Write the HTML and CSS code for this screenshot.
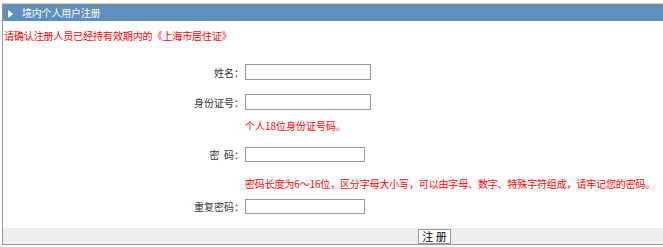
FILE: index.html
```html
<!DOCTYPE html>
<html lang="zh-CN">
<head>
<meta charset="utf-8">
<title>境内个人用户注册</title>
<link rel="stylesheet" href="styles.css">
</head>
<body>
<div class="panel">
  <div class="panel-head">
    <svg class="arrow" width="5" height="8" viewBox="0 0 5 8"><polygon points="0,0 5,4 0,8" fill="#fff"/></svg>
    <span class="title">境内个人用户注册</span>
  </div>
  <p class="intro">请确认注册人员已经持有效期内的《上海市居住证》</p>
  <div class="form">
    <div class="row r-name">
      <label class="lbl">姓名：</label>
      <input class="inp wide" type="text">
    </div>
    <div class="row r-id">
      <label class="lbl">身份证号：</label>
      <input class="inp wide" type="text">
    </div>
    <div class="hint h-id">个人18位身份证号码。</div>
    <div class="row r-pwd">
      <label class="lbl">密&nbsp;&nbsp;码：</label>
      <input class="inp narrow" type="password">
    </div>
    <div class="hint h-pwd">密码长度为6～16位，区分字母大小写，可以由字母、数字、特殊字符组成，请牢记您的密码。</div>
    <div class="row r-rep">
      <label class="lbl">重复密码：</label>
      <input class="inp narrow" type="password">
    </div>
  </div>
  <div class="actions">
    <button class="btn" type="button">注 册</button>
  </div>
</div>
</body>
</html>
```

FILE: styles.css
```css
html, body {
  margin: 0;
  padding: 0;
  background: #fff;
}
body {
  font-family: "Noto Sans CJK SC", "Noto Sans", sans-serif;
  font-size: 10px;
  color: #333;
}
.panel {
  margin: 3px 0 0 2px;
  border-top: 1px solid #d0d0d0;
  border-left: 1px solid #999;
  border-bottom: 1px solid #999;
  padding-left: 1px;
}
.panel-head {
  height: 16px;
  margin-left: -1px;
  border-top: 1px solid #8a8a8a;
  background: #5f8fbe;
  display: flex;
  align-items: center;
  color: #fff;
}
.arrow {
  margin-left: 5px;
  margin-top: 1px;
}
.title {
  margin-left: 9px;
  line-height: 16px;
  letter-spacing: -0.2px;
}
.intro {
  margin: 9px 0 0 0;
  line-height: 12px;
  color: #f00;
  letter-spacing: -0.1px;
}
.form {
  display: flex;
  flex-direction: column;
}
.row {
  display: flex;
  align-items: center;
  height: 16px;
}
.lbl {
  width: 240px;
  text-align: right;
  color: #333;
  white-space: nowrap;
}
.inp {
  box-sizing: border-box;
  height: 16px;
  margin: 0 0 0 1px;
  padding: 0 2px;
  border: 1px solid #999;
  background: #fff;
  font: inherit;
}
.wide { width: 126px; }
.narrow { width: 120px; }
.r-name { margin-top: 22px; }
.r-id { margin-top: 14px; }
.hint {
  margin-left: 241px;
  line-height: 12px;
  color: #f00;
  white-space: nowrap;
}
.h-id { margin-top: 10px; }
.r-pwd { margin-top: 15px; height: 15px; }
.r-pwd .inp { height: 15px; }
.h-pwd { margin-top: 16px; letter-spacing: -0.15px; }
.r-rep { margin-top: 9px; height: 15px; }
.r-rep .inp { height: 15px; }
.actions {
  margin-top: 14px;
  margin-left: -1px;
  height: 16px;
  background: #eee;
  display: flex;
  align-items: center;
}
.btn {
  box-sizing: border-box;
  margin-left: 415px;
  width: 33px;
  height: 15px;
  padding: 0;
  border: 1px solid #999;
  background: #fff;
  color: #000;
  font-family: "Noto Sans CJK SC", sans-serif;
  font-size: 11px;
  line-height: 13px;
}
```
